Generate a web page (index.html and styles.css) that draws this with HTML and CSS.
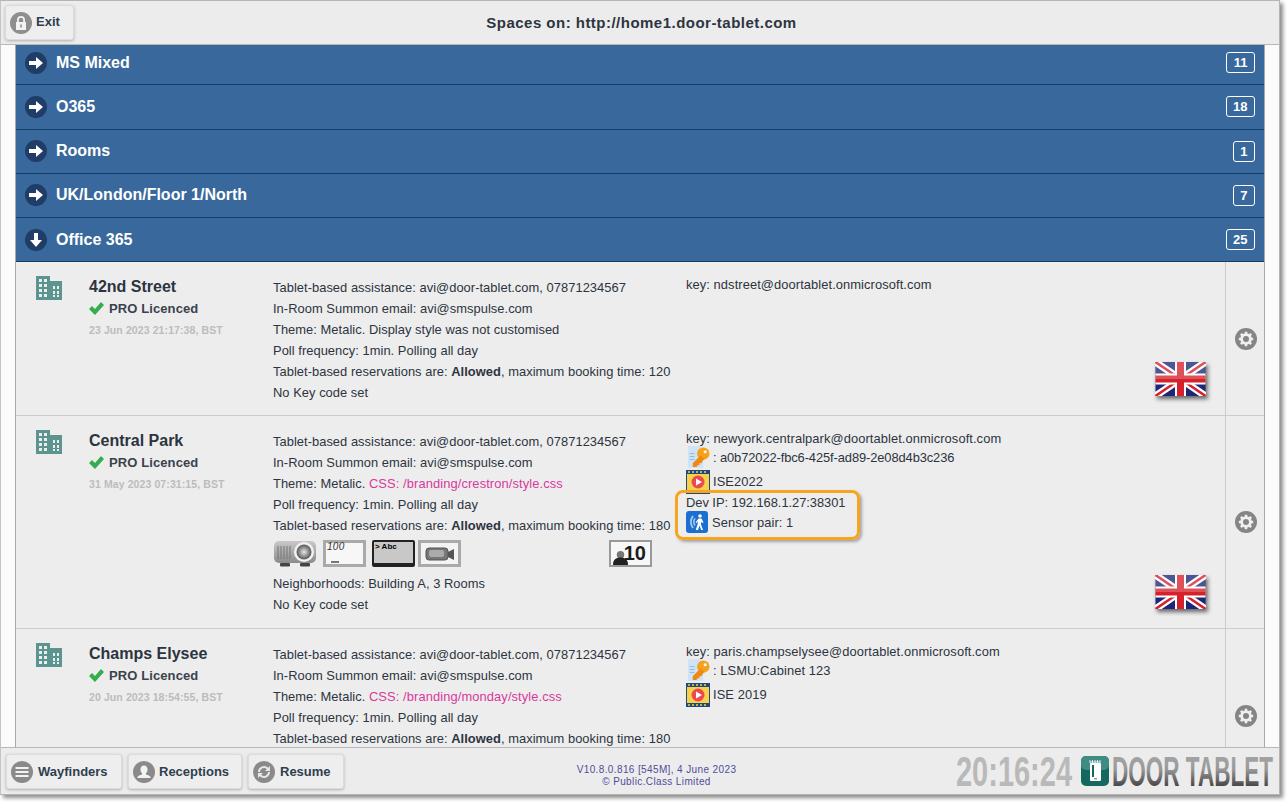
FILE: index.html
```html
<!DOCTYPE html>
<html lang="en">
<head>
<meta charset="utf-8">
<title>Spaces</title>
<link rel="stylesheet" href="styles.css">
</head>
<body>
<svg class="defs" width="0" height="0" aria-hidden="true">
  <defs>
    <symbol id="arrow-right" viewBox="0 0 22 22"><circle cx="11" cy="11" r="11" fill="#1f3d66"/><path d="M4 9h7V5l7 6-7 6v-4H4z" fill="#fff"/></symbol>
    <symbol id="arrow-down" viewBox="0 0 22 22"><circle cx="11" cy="11" r="11" fill="#1f3d66"/><path d="M9 4h4v7h4l-6 7-6-7h4z" fill="#fff"/></symbol>
    <symbol id="building" viewBox="0 0 26 24"><path fill="#5c9490" fill-rule="evenodd" d="M0 0h14v5h12v19H0zM3 3v3h3V3zm5 0v3h3V3zM3 8v3h3V8zm5 0v3h3V8zM3 13v3h3v-3zm5 0v3h3v-3zM3 18v3h3v-3zm5 0v3h3v-3zm9-8v3h2v-3zm4 0v3h2v-3zm-4 5v3h2v-3zm4 0v3h2v-3zm-4 4v2h2v-2zm4 0v2h2v-2z"/></symbol>
    <symbol id="check" viewBox="0 0 15 13"><path d="M0 7l3-3 3 3 6-7 3 3-9 10z" fill="#35ad4a"/></symbol>
    <symbol id="gear" viewBox="0 0 22 22">
      <circle cx="11" cy="11" r="11" fill="#858585"/>
      <circle cx="11" cy="11" r="5.800" fill="#f0f0f0"/>
      <path d="M11 3.800v14.400M3.800 11h14.400M5.900 5.900l10.200 10.200M16.100 5.900L5.900 16.100" stroke="#f0f0f0" stroke-width="2.600"/>
      <circle cx="11" cy="11" r="3" fill="#858585"/>
    </symbol>
    <symbol id="flag" viewBox="0 0 50 34">
      <rect width="50" height="34" fill="#1c2778"/>
      <path d="M0 0l50 34M50 0L0 34" stroke="#fff" stroke-width="7"/>
      <path d="M0 0l25 17M50 34L25 17M50 0L25 17M0 34l25-17" stroke="#d6212b" stroke-width="2.500"/>
      <path d="M25 0v34M0 17h50" stroke="#fff" stroke-width="11"/>
      <path d="M25 0v34M0 17h50" stroke="#d6212b" stroke-width="7"/>
      <rect width="50" height="17" fill="#fff" opacity=".22"/>
    </symbol>
    <symbol id="keydoc" viewBox="0 0 25 25">
      <path d="M2 1h13l3 3v20H2z" fill="#cfe5f7"/>
      <path d="M4 9h5M4 12h5M4 15h5" stroke="#8fb6d6"/>
      <circle cx="18" cy="9" r="6.500" fill="#f5a11c"/>
      <circle cx="20" cy="7" r="1.600" fill="#fff"/>
      <path d="M15 11l-8 8v4h4l1-2h2v-2h2l3-5z" fill="#ee8a12"/>
    </symbol>
    <symbol id="film" viewBox="0 0 24 24">
      <rect width="24" height="24" fill="#1f4a80"/>
      <rect x="1" y="4" width="22" height="16" fill="#f6d24a"/>
      <path d="M2 2h2M6 2h2M10 2h2M14 2h2M18 2h2M2 22h2M6 22h2M10 22h2M14 22h2M18 22h2" stroke="#f6d24a" stroke-width="1.500"/>
      <circle cx="12" cy="12" r="6.500" fill="#ec4a4f"/>
      <path d="M10 8.500l6 3.500-6 3.500z" fill="#fff"/>
    </symbol>
    <symbol id="sensor" viewBox="0 0 22 22">
      <rect width="22" height="22" rx="3" fill="#1a6fd0"/>
      <path d="M7 5a10 10 0 0 0 0 12" fill="none" stroke="#a7c9f0" stroke-width="2"/>
      <path d="M9 7.500a6 6 0 0 0 0 7" fill="none" stroke="#a7c9f0" stroke-width="1.500"/>
      <circle cx="14" cy="5" r="1.800" fill="#fff"/>
      <path d="M12.500 7.500h3l2 4-1.500.5-1-1.500v3l2 5.500h-1.800l-1.700-4.500-1.500 4.500H9.700l2-6V10l-1 2-1.200-.6z" fill="#fff"/>
    </symbol>
  </defs>
</svg>

<div class="window">
  <header class="topbar">
    <a class="btn btn-exit">
      <svg class="btn-icon" viewBox="0 0 22 22"><circle cx="11" cy="11" r="11" fill="#8e8e8e"/><path d="M7 10V8a4 4 0 0 1 8 0v2h-1.800V8a2.200 2.200 0 0 0-4.400 0v2z" fill="#f2f2f2"/><path d="M6 10h10v8H6z" fill="#f2f2f2"/><rect x="10.200" y="12.500" width="1.600" height="3" fill="#8e8e8e"/></svg>
      <span class="exit-t">Exit</span>
    </a>
    <h1 class="title">Spaces on: http://home1.door-tablet.com</h1>
  </header>

  <main class="content">
    <div class="list">
      <div class="group"><svg class="g-icon"><use href="#arrow-right"/></svg><span class="g-name">MS Mixed</span><span class="count">11</span></div>
      <div class="group"><svg class="g-icon"><use href="#arrow-right"/></svg><span class="g-name">O365</span><span class="count">18</span></div>
      <div class="group"><svg class="g-icon"><use href="#arrow-right"/></svg><span class="g-name">Rooms</span><span class="count">1</span></div>
      <div class="group"><svg class="g-icon"><use href="#arrow-right"/></svg><span class="g-name">UK/London/Floor 1/North</span><span class="count">7</span></div>
      <div class="group"><svg class="g-icon"><use href="#arrow-down"/></svg><span class="g-name">Office 365</span><span class="count">25</span></div>

      <section class="room room-a">
        <div class="c-icon"><svg class="b-icon"><use href="#building"/></svg></div>
        <div class="c-name">
          <div class="name">42nd Street</div>
          <div class="lic"><svg class="check"><use href="#check"/></svg>PRO Licenced</div>
          <div class="stamp">23 Jun 2023 21:17:38, BST</div>
        </div>
        <div class="c-info">
          <p>Tablet-based assistance: avi@door-tablet.com, 07871234567</p>
          <p>In-Room Summon email: avi@smspulse.com</p>
          <p>Theme: Metalic. Display style was not customised</p>
          <p>Poll frequency: 1min. Polling all day</p>
          <p>Tablet-based reservations are: <b>Allowed</b>, maximum booking time: 120</p>
          <p>No Key code set</p>
        </div>
        <div class="c-key">
          <div class="k-line">key: ndstreet@doortablet.onmicrosoft.com</div>
          <svg class="uk"><use href="#flag"/></svg>
        </div>
        <div class="c-gear"><svg class="gear"><use href="#gear"/></svg></div>
      </section>

      <section class="room room-b">
        <div class="c-icon"><svg class="b-icon"><use href="#building"/></svg></div>
        <div class="c-name">
          <div class="name">Central Park</div>
          <div class="lic"><svg class="check"><use href="#check"/></svg>PRO Licenced</div>
          <div class="stamp">31 May 2023 07:31:15, BST</div>
        </div>
        <div class="c-info">
          <p>Tablet-based assistance: avi@door-tablet.com, 07871234567</p>
          <p>In-Room Summon email: avi@smspulse.com</p>
          <p>Theme: Metalic. <span class="css">CSS: /branding/crestron/style.css</span></p>
          <p>Poll frequency: 1min. Polling all day</p>
          <p>Tablet-based reservations are: <b>Allowed</b>, maximum booking time: 180</p>
          <div class="equip">
            <svg class="eq" viewBox="0 0 43 27"><defs><linearGradient id="pj" x1="0" y1="0" x2="0" y2="1"><stop offset="0" stop-color="#c9c9c9"/><stop offset="1" stop-color="#8b8b8b"/></linearGradient><radialGradient id="pl"><stop offset="0" stop-color="#e8e8e8"/><stop offset="1" stop-color="#555"/></radialGradient></defs><rect y="1" width="42" height="22" rx="5" fill="url(#pj)"/><path d="M4 6v13M7 6v13M10 6v13M13 6v13M16 6v13" stroke="#777"/><circle cx="30" cy="12" r="10" fill="#f2f2f2"/><circle cx="30" cy="12" r="7.500" fill="url(#pl)"/><rect x="6" y="23" width="10" height="3.500" rx="1" fill="#444"/><rect x="26" y="23" width="10" height="3.500" rx="1" fill="#444"/></svg>
            <span class="eq board"><i>100</i><s></s></span>
            <span class="eq abc"><b>&gt; Abc</b></span>
            <svg class="eq cam" viewBox="0 0 43 27"><rect x="1.500" y="1.500" width="40" height="24" fill="#f3f3f3" stroke="#aaa" stroke-width="3"/><rect x="8" y="8" width="22" height="12" rx="3" fill="#777" stroke="#555"/><rect x="11" y="10" width="15" height="7" rx="2" fill="#aaa"/><path d="M30 12l6-3v11l-6-3z" fill="#555"/></svg>
            <span class="cap"><svg class="cap-p" viewBox="0 0 16 16"><circle cx="8" cy="5" r="4" fill="#777"/><path d="M0 16c0-6 3-8 8-8s8 2 8 8z" fill="#222"/></svg><em>10</em></span>
          </div>
          <p>Neighborhoods: Building A, 3 Rooms</p>
          <p>No Key code set</p>
        </div>
        <div class="c-key">
          <div class="k-line">key: newyork.centralpark@doortablet.onmicrosoft.com</div>
          <div class="k-row k-row-key"><svg class="k-ic"><use href="#keydoc"/></svg><span class="guid">: a0b72022-fbc6-425f-ad89-2e08d4b3c236</span></div>
          <div class="k-row k-row-film"><svg class="k-ic"><use href="#film"/></svg><span>ISE2022</span></div>
          <div class="hl">
            <div class="hl-ip">Dev IP: 192.168.1.27:38301</div>
            <div class="hl-s"><svg class="s-ic"><use href="#sensor"/></svg><span>Sensor pair: 1</span></div>
          </div>
          <svg class="uk"><use href="#flag"/></svg>
        </div>
        <div class="c-gear"><svg class="gear"><use href="#gear"/></svg></div>
      </section>

      <section class="room room-c">
        <div class="c-icon"><svg class="b-icon"><use href="#building"/></svg></div>
        <div class="c-name">
          <div class="name">Champs Elysee</div>
          <div class="lic"><svg class="check"><use href="#check"/></svg>PRO Licenced</div>
          <div class="stamp">20 Jun 2023 18:54:55, BST</div>
        </div>
        <div class="c-info">
          <p>Tablet-based assistance: avi@door-tablet.com, 07871234567</p>
          <p>In-Room Summon email: avi@smspulse.com</p>
          <p>Theme: Metalic. <span class="css">CSS: /branding/monday/style.css</span></p>
          <p>Poll frequency: 1min. Polling all day</p>
          <p>Tablet-based reservations are: <b>Allowed</b>, maximum booking time: 180</p>
        </div>
        <div class="c-key">
          <div class="k-line">key: paris.champselysee@doortablet.onmicrosoft.com</div>
          <div class="k-row k-row-key"><svg class="k-ic"><use href="#keydoc"/></svg><span>: LSMU:Cabinet 123</span></div>
          <div class="k-row k-row-film"><svg class="k-ic"><use href="#film"/></svg><span>ISE 2019</span></div>
        </div>
        <div class="c-gear"><svg class="gear"><use href="#gear"/></svg></div>
      </section>
    </div>
  </main>

  <footer class="bottombar">
    <div class="f-btns">
      <a class="btn btn-way"><svg class="btn-icon" viewBox="0 0 22 22"><circle cx="11" cy="11" r="11" fill="#8a8a8a"/><path d="M4.500 7h13M4.500 11h13M4.500 15h13" stroke="#f2f2f2" stroke-width="2"/></svg><span>Wayfinders</span></a>
      <a class="btn btn-rec"><svg class="btn-icon" viewBox="0 0 22 22"><circle cx="11" cy="11" r="11" fill="#8a8a8a"/><path d="M11 4.500c2.300 0 3.500 1.800 3.500 4 0 1.600-.6 3-1.500 3.800v1.200c2 .6 4 1.200 4.500 2.500v1H4.500v-1c.5-1.300 2.500-1.900 4.500-2.500v-1.200c-.9-.8-1.500-2.200-1.500-3.800 0-2.200 1.200-4 3.500-4z" fill="#f2f2f2"/></svg><span>Receptions</span></a>
      <a class="btn btn-res"><svg class="btn-icon" viewBox="0 0 22 22"><circle cx="11" cy="11" r="11" fill="#8a8a8a"/><path d="M5 11a6 6 0 0 1 10.200-4.200L17 5v5h-5l1.800-1.800A4 4 0 0 0 7 11zM17 11a6 6 0 0 1-10.200 4.200L5 17v-5h5l-1.800 1.800A4 4 0 0 0 15 11z" fill="#e8e8e8"/></svg><span>Resume</span></a>
    </div>
    <div class="version">
      <div>V10.8.0.816 [545M], 4 June 2023</div>
      <div>© Public.Class Limited</div>
    </div>
    <div class="brand">
      <svg class="clock" width="116" height="34" viewBox="0 0 116 34"><text class="big-t" x="0" y="32" textLength="116" lengthAdjust="spacingAndGlyphs" fill="#b9b9b9">20:16:24</text></svg>
      <svg class="logo" viewBox="0 0 28 30"><rect width="28" height="30" rx="5" fill="#14685f"/><rect width="28" height="14" rx="5" fill="#3f8c83"/><path d="M9 6h10M9 4v3M11.500 4v3M14 4v3M16.500 4v3M19 4v3" stroke="#dfeeee"/><rect x="9" y="7" width="11" height="18" rx="1" fill="#fff"/><rect x="11" y="9" width="2" height="12" fill="#14685f"/><rect x="13" y="22" width="3" height="1.500" fill="#999"/></svg>
      <svg class="wordmark" width="161" height="34" viewBox="0 0 161 34"><defs><linearGradient id="wm" x1="0" y1="0" x2="0" y2="1"><stop offset="0" stop-color="#aaa"/><stop offset=".45" stop-color="#999"/><stop offset=".9" stop-color="#333"/></linearGradient></defs><text class="big-t" x="0" y="32" textLength="161" lengthAdjust="spacingAndGlyphs" fill="url(#wm)">DOOR TABLET</text></svg>
    </div>
  </footer>
</div>
</body>
</html>
```

FILE: styles.css
```css
* { box-sizing: border-box; }
html, body { margin: 0; padding: 0; height: 100%; overflow: hidden; background: #fff; }
body { font-family: "Liberation Sans", Arial, sans-serif; font-size: 12px; color: #2c3440; }
.defs { position: absolute; }

.window {
  width: 1280px; height: 795px;
  display: flex; flex-direction: column;
  border: 1px solid #b4b4b4; border-left-color: #c4c4c4;
  box-shadow: 3px 3px 4px #8c8c8c;
  background: #fbfbfb;
}

/* top bar */
.topbar {
  position: relative; flex: 0 0 44px; height: 44px;
  display: flex; align-items: center; justify-content: center;
  background: #ececec; border-bottom: 1px solid #b8b8b8;
}
.title { margin: 0 0 0 3px; font-size: 15px; font-weight: bold; color: #2d3540; letter-spacing: .48px; }

.btn {
  display: flex; align-items: center; gap: 5px;
  height: 35px; padding: 0 4px;
  background: #eeeeee; border: 1px solid #dcdcdc; border-radius: 3px;
  box-shadow: 0 1px 3px #b0b0b0;
  font-size: 13px; font-weight: bold; color: #2f3f50;
}
.btn-icon { width: 22px; height: 22px; flex: none; }
.btn-exit { position: absolute; left: 4px; top: 4px; width: 69px; gap: 4px; }
.exit-t { padding-bottom: 2px; }

/* list */
.content { flex: 1 1 0; min-height: 0; overflow: hidden; padding: 0 14px; }
.list { margin-top: -4px; border-left: 1px solid #a9a9a9; border-right: 1px solid #a9a9a9; }

.group {
  display: flex; align-items: center;
  height: 44.250px; padding: 0 9px 0 9px;
  background: #39699c; border-bottom: 1px solid #0f3f66;
  color: #fff; font-size: 16px; font-weight: bold;
}
.g-icon { width: 22px; height: 22px; flex: none; }
.g-name { margin-left: 9px; flex: 1; }
.count {
  height: 21px; padding: 0 6.500px;
  display: flex; align-items: center; justify-content: center;
  border: 1px solid #fff; border-radius: 3px;
  font-size: 13px;
}

.room {
  display: grid; grid-template-columns: 73px 184px 413px 539px 40px;
  background: #ededed; border-bottom: 1px solid #cccccc;
}
.room-a { height: 154px; }
.room-b { height: 213px; }
.room-c { height: 174px; }

.c-icon { padding: 14px 0 0 20px; }
.b-icon { width: 26px; height: 24px; display: block; }

.c-name { padding-top: 14px; }
.name { padding-top: 1px; font-size: 16px; font-weight: bold; line-height: 20px; color: #2c3440; }
.lic { display: flex; align-items: center; height: 23px; font-size: 13px; font-weight: bold; color: #3a424e; letter-spacing: .1px; }
.check { width: 15px; height: 13px; margin-right: 5px; flex: none; }
.stamp { margin-top: 2px; line-height: 16px; font-size: 10.500px; font-weight: bold; color: #bcbcbc; letter-spacing: .1px; }

.c-info { padding-top: 14.500px; }
.c-info p { margin: 0; line-height: 21px; font-size: 12.900px; letter-spacing: .04px; white-space: nowrap; }
.css { color: #d8399c; letter-spacing: .1px; }

.equip { position: relative; display: flex; align-items: center; gap: 6px; height: 27px; margin: 4px 0 6.500px 1px; }
.eq { width: 43px; height: 27px; flex: none; display: block; }
.board { position: relative; background: #f7f7f7; border: 3px solid #aaa; }
.board i { position: absolute; left: 1px; top: -2px; font-size: 10px; font-style: italic; color: #333; letter-spacing: .3px; }
.board s { position: absolute; left: 5px; bottom: 1px; width: 8px; height: 2px; background: #777; }
.abc { background: #c8c8c8; border: 2px solid #222; border-bottom-width: 4px; border-radius: 2px; font-size: 8px; line-height: 10px; padding-left: 1px; color: #000; }
.abc b { display: block; }
.cam { margin-left: -3px; }
.cap { margin-left: 142px; position: relative; width: 43px; height: 27px; background: #f7f7f7; border: 2px solid #999; display: flex; align-items: center; justify-content: flex-end; padding-right: 4px; }
.cap-p { position: absolute; left: 2px; bottom: 0; width: 15px; height: 15px; }
.cap em { font-style: normal; font-weight: bold; font-size: 20px; line-height: 1; color: #1b1b1b; position: relative; }

.c-key { display: flex; flex-direction: column; padding: 14px 19px 19px 0; font-size: 12.900px; letter-spacing: .08px; }
.k-line { height: 17px; line-height: 17px; white-space: nowrap; }
.k-row { display: flex; align-items: center; white-space: nowrap; }
.k-ic { width: 24px; height: 24px; flex: none; margin-right: 3px; }
.k-row-key { height: 20px; }
.k-row-film { height: 29px; }
.guid { letter-spacing: -.1px; }
.hl {
  width: 185px; height: 50px; margin: -6px 0 0 -11px; padding: 2px 0 0 8px;
  border: 3px solid #f5a61e; border-radius: 8px; box-shadow: 2px 2px 3px #a5a5a5;
}
.hl-ip { height: 15px; line-height: 15px; white-space: nowrap; letter-spacing: -.04px; }
.hl-s { display: flex; align-items: center; height: 24px; }
.s-ic { width: 22px; height: 22px; margin-right: 4px; flex: none; }

.uk { width: 51px; height: 34px; margin-top: auto; align-self: flex-end; filter: drop-shadow(2px 3px 2px #666); }

.c-gear { display: flex; align-items: center; justify-content: center; border-left: 1px solid #cccccc; }
.gear { width: 22px; height: 22px; }

/* bottom bar */
.bottombar {
  flex: 0 0 47px; height: 47px;
  display: flex; align-items: center;
  padding: 0 5px 0 5px;
  background: #ececec; border-top: 1px solid #b8b8b8;
}
.f-btns { display: flex; gap: 6px; padding-top: 1px; }
.btn-way { width: 116px; }
.btn-rec { width: 114px; gap: 4px; }
.btn-res { width: 96px; }
.version { flex: 1; padding-left: 13px; padding-top: 10px; text-align: center; font-size: 10px; line-height: 12px; color: #4f4c9c; letter-spacing: .38px; }
.brand { display: flex; align-items: center; width: 318px; flex: none; }
.big-t { font-size: 42px; font-weight: bold; font-family: "Liberation Sans", Arial, sans-serif; }
.clock, .wordmark { flex: none; display: block; overflow: visible; }
.logo { width: 28px; height: 30px; flex: none; margin: 0 3px 0 9px; }
```
